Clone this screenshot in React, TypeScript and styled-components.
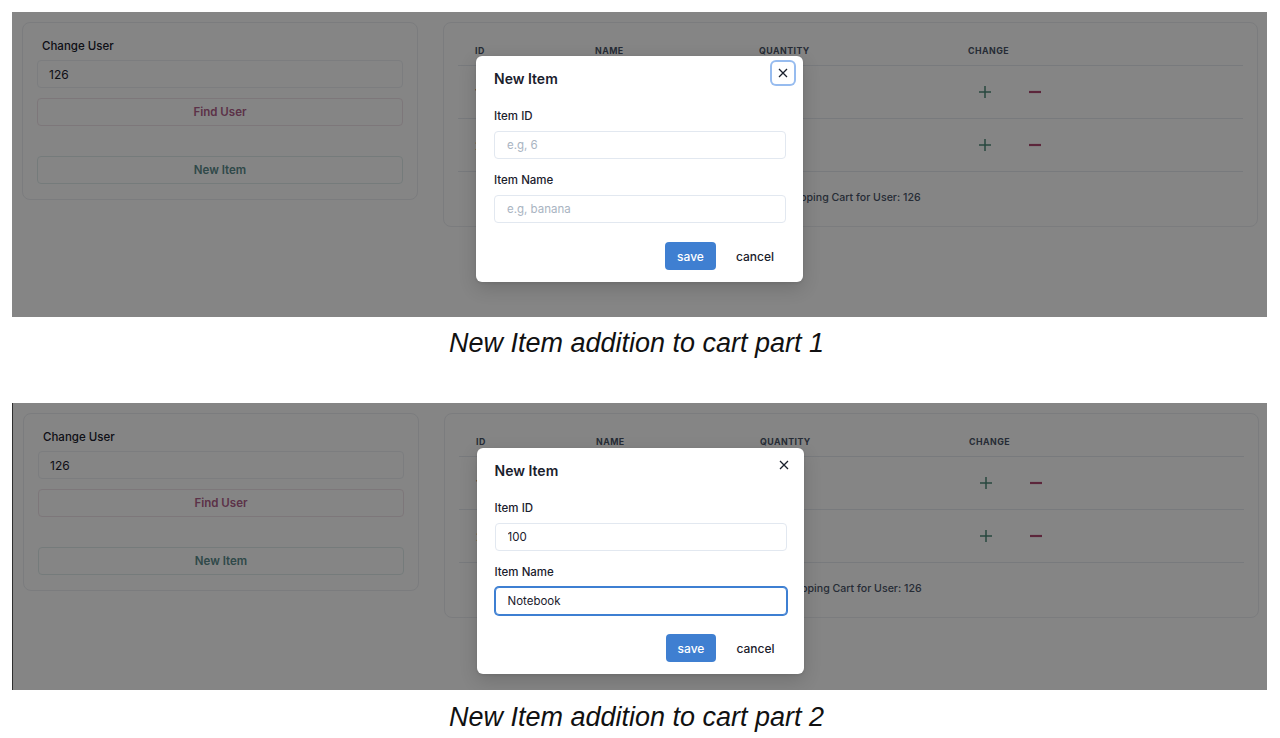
import React from "react";
import styled, { createGlobalStyle, css } from "styled-components";

const GlobalStyle = createGlobalStyle`
  html, body { margin: 0; padding: 0; background: #ffffff; }
  body { font-family: Inter, "Noto Sans", sans-serif; color: #1a202c; }
  *, *::before, *::after { box-sizing: border-box; }
`;

const Page = styled.div`
  width: 1280px;
  display: flex;
  flex-direction: column;
  padding: 12px 13px 0 12px;
`;

const Shot = styled.section<{ $h: number; $edge?: boolean }>`
  position: relative;
  height: ${(p) => p.$h}px;
  overflow: hidden;
  background: #ffffff;
  ${(p) => p.$edge && css`border-left: 1px solid #2e2e2e;`}
`;

const Caption = styled.p<{ $mt: number; $mb: number }>`
  margin: ${(p) => p.$mt}px 0 ${(p) => p.$mb}px;
  padding-right: 6px;
  text-align: center;
  font-family: "Liberation Sans", Arial, sans-serif;
  font-style: italic;
  font-size: 27px;
  line-height: 31px;
  color: #111;
`;

const AppLayout = styled.div`
  display: grid;
  grid-template-columns: 396px 815px;
  column-gap: 25px;
  padding: 10px;
  align-items: start;
`;

const Card = styled.div`
  border: 1px solid #eceef2;
  border-radius: 8px;
  background: #ffffff;
`;

const UserCard = styled(Card)`
  display: flex;
  flex-direction: column;
  padding: 14px 14px 15px;
`;

const UserLabel = styled.label`
  margin: 0 0 5px 5px;
  font-size: 11.5px;
  line-height: 18px;
  font-weight: 500;
  color: #1a202c;
`;

const UserInput = styled.input`
  height: 28px;
  width: 100%;
  padding: 0 11px;
  border: 1px solid #edf0f4;
  border-radius: 4px;
  font-family: inherit;
  font-size: 12px;
  color: #1a202c;
  background: #ffffff;
  outline: none;
`;

const OutlineButton = styled.button<{ $tone: "pink" | "teal"; $mt: number }>`
  margin-top: ${(p) => p.$mt}px;
  height: 28px;
  width: 100%;
  border-radius: 4px;
  background: #ffffff;
  font-family: inherit;
  font-size: 11.5px;
  font-weight: 600;
  cursor: pointer;
  ${(p) =>
    p.$tone === "pink"
      ? css`
          color: #b0608a;
          border: 1px solid #f0e4ea;
        `
      : css`
          color: #5a8c8c;
          border: 1px solid #e0ecec;
        `}
`;

const CartCard = styled(Card)`
  padding: 14px;
`;

const Table = styled.div`
  display: flex;
  flex-direction: column;
`;

const TableRow = styled.div<{ $head?: boolean }>`
  display: grid;
  grid-template-columns: 120px 164px 209px 1fr;
  align-items: center;
  height: ${(p) => (p.$head ? 29 : 53)}px;
  border-bottom: 1px solid #e6eaf0;
`;

const HeadCell = styled.div`
  padding-left: 17px;
  font-size: 8.8px;
  font-weight: 700;
  letter-spacing: 0.45px;
  text-transform: uppercase;
  color: #4a5568;
  padding-bottom: 2px;
`;

const Cell = styled.div`
  padding-left: 17px;
  font-size: 12px;
  color: #1a202c;
`;

const ChangeCell = styled.div`
  padding-left: 17px;
  display: flex;
  gap: 16px;
`;

const IconButton = styled.button`
  width: 34px;
  height: 34px;
  display: flex;
  align-items: center;
  justify-content: center;
  border: none;
  background: transparent;
  padding: 0;
  cursor: pointer;
`;

const TableCaption = styled.div`
  padding: 17px 0 5px;
  text-align: center;
  font-size: 10.6px;
  line-height: 18px;
  font-weight: 500;
  color: #4a5568;
`;

const Backdrop = styled.div<{ $top: number }>`
  position: absolute;
  inset: 0;
  background: rgba(0, 0, 0, 0.48);
  display: flex;
  justify-content: center;
  align-items: flex-start;
  padding-top: ${(p) => p.$top}px;
`;

const Dialog = styled.div`
  position: relative;
  width: 327px;
  background: #ffffff;
  border-radius: 6px;
  box-shadow: 0 6px 18px rgba(0, 0, 0, 0.16), 0 1px 3px rgba(0, 0, 0, 0.08);
`;

const DialogHeader = styled.h2`
  margin: 0;
  padding: 13px 18px 19px;
  font-size: 14px;
  line-height: 20px;
  font-weight: 600;
  color: #1a202c;
`;

const CloseButton = styled.button<{ $focused?: boolean }>`
  position: absolute;
  top: 6px;
  right: 9px;
  width: 22px;
  height: 22px;
  display: flex;
  align-items: center;
  justify-content: center;
  padding: 0;
  border: none;
  border-radius: 4px;
  background: transparent;
  color: #1a202c;
  cursor: pointer;
  ${(p) =>
    p.$focused &&
    css`
      box-shadow: 0 0 0 2px rgba(66, 133, 225, 0.55);
    `}
`;

const DialogBody = styled.div`
  display: flex;
  flex-direction: column;
  padding: 0 17px 0 18px;
`;

const Field = styled.div<{ $mt?: number }>`
  display: flex;
  flex-direction: column;
  margin-top: ${(p) => p.$mt ?? 0}px;
`;

const FieldLabel = styled.label`
  margin-bottom: 7px;
  font-size: 11.5px;
  line-height: 16px;
  font-weight: 500;
  color: #1a202c;
`;

const FieldInput = styled.input<{ $focused?: boolean }>`
  height: 28px;
  width: 100%;
  padding: 0 12px;
  border: 1px solid #e2e8f0;
  border-radius: 4px;
  font-family: inherit;
  font-size: 11.5px;
  color: #1a202c;
  background: #ffffff;
  outline: none;
  &::placeholder {
    color: #a9b4c2;
  }
  ${(p) =>
    p.$focused &&
    css`
      border-color: #3d7fd2;
      box-shadow: 0 0 0 1px #3d7fd2;
    `}
`;

const DialogFooter = styled.div`
  display: flex;
  justify-content: flex-end;
  gap: 8px;
  padding: 19px 17px 12px;
`;

const ActionButton = styled.button<{ $primary?: boolean }>`
  height: 28px;
  padding: 0 12px;
  border: none;
  border-radius: 4px;
  font-family: inherit;
  font-size: 12px;
  font-weight: 500;
  cursor: pointer;
  ${(p) =>
    p.$primary
      ? css`
          background: #3f7fd1;
          color: #ffffff;
        `
      : css`
          background: transparent;
          color: #1a202c;
        `}
`;

const PlusIcon = () => (
  <svg width="14" height="14" viewBox="0 0 14 14" aria-hidden="true">
    <path d="M7 1v12M1 7h12" stroke="#4d8a7a" strokeWidth="1.5" fill="none" />
  </svg>
);

const MinusIcon = () => (
  <svg width="14" height="14" viewBox="0 0 14 14" aria-hidden="true">
    <path d="M1 7h12" stroke="#b04a72" strokeWidth="2.2" fill="none" />
  </svg>
);

const CloseIcon = () => (
  <svg width="10" height="10" viewBox="0 0 10 10" aria-hidden="true">
    <path d="M1 1l8 8M9 1l-8 8" stroke="#1a202c" strokeWidth="1.3" fill="none" />
  </svg>
);

const items = [
  { id: "1", name: "Apple", quantity: "2" },
  { id: "2", name: "Banana", quantity: "4" },
];

const CartApp = () => (
  <AppLayout>
    <UserCard>
      <UserLabel>Change User</UserLabel>
      <UserInput defaultValue="126" readOnly />
      <OutlineButton $tone="pink" $mt={10}>Find User</OutlineButton>
      <OutlineButton $tone="teal" $mt={30}>New Item</OutlineButton>
    </UserCard>
    <CartCard>
      <Table>
        <TableRow $head>
          <HeadCell>ID</HeadCell>
          <HeadCell>Name</HeadCell>
          <HeadCell>Quantity</HeadCell>
          <HeadCell>Change</HeadCell>
        </TableRow>
        {items.map((it) => (
          <TableRow key={it.id}>
            <Cell>{it.id}</Cell>
            <Cell>{it.name}</Cell>
            <Cell>{it.quantity}</Cell>
            <ChangeCell>
              <IconButton aria-label="add">
                <PlusIcon />
              </IconButton>
              <IconButton aria-label="remove">
                <MinusIcon />
              </IconButton>
            </ChangeCell>
          </TableRow>
        ))}
        <TableCaption>Shopping Cart for User: 126</TableCaption>
      </Table>
    </CartCard>
  </AppLayout>
);

type ModalProps = {
  top: number;
  closeFocused?: boolean;
  itemId?: string;
  itemName?: string;
  nameFocused?: boolean;
};

const NewItemModal = ({ top, closeFocused, itemId, itemName, nameFocused }: ModalProps) => (
  <Backdrop $top={top}>
    <Dialog>
      <DialogHeader>New Item</DialogHeader>
      <CloseButton $focused={closeFocused} aria-label="close">
        <CloseIcon />
      </CloseButton>
      <DialogBody>
        <Field>
          <FieldLabel>Item ID</FieldLabel>
          <FieldInput placeholder="e.g, 6" defaultValue={itemId} readOnly />
        </Field>
        <Field $mt={13}>
          <FieldLabel>Item Name</FieldLabel>
          <FieldInput
            placeholder="e.g, banana"
            defaultValue={itemName}
            $focused={nameFocused}
            readOnly
          />
        </Field>
      </DialogBody>
      <DialogFooter>
        <ActionButton $primary>save</ActionButton>
        <ActionButton>cancel</ActionButton>
      </DialogFooter>
    </Dialog>
  </Backdrop>
);

export default function App() {
  return (
    <>
      <GlobalStyle />
      <Page>
        <Shot $h={305}>
          <CartApp />
          <NewItemModal top={44} closeFocused />
        </Shot>
        <Caption $mt={11} $mb={44}>New Item addition to cart part 1</Caption>
        <Shot $h={287} $edge>
          <CartApp />
          <NewItemModal top={45} itemId="100" itemName="Notebook" nameFocused />
        </Shot>
        <Caption $mt={12} $mb={0}>New Item addition to cart part 2</Caption>
      </Page>
    </>
  );
}
